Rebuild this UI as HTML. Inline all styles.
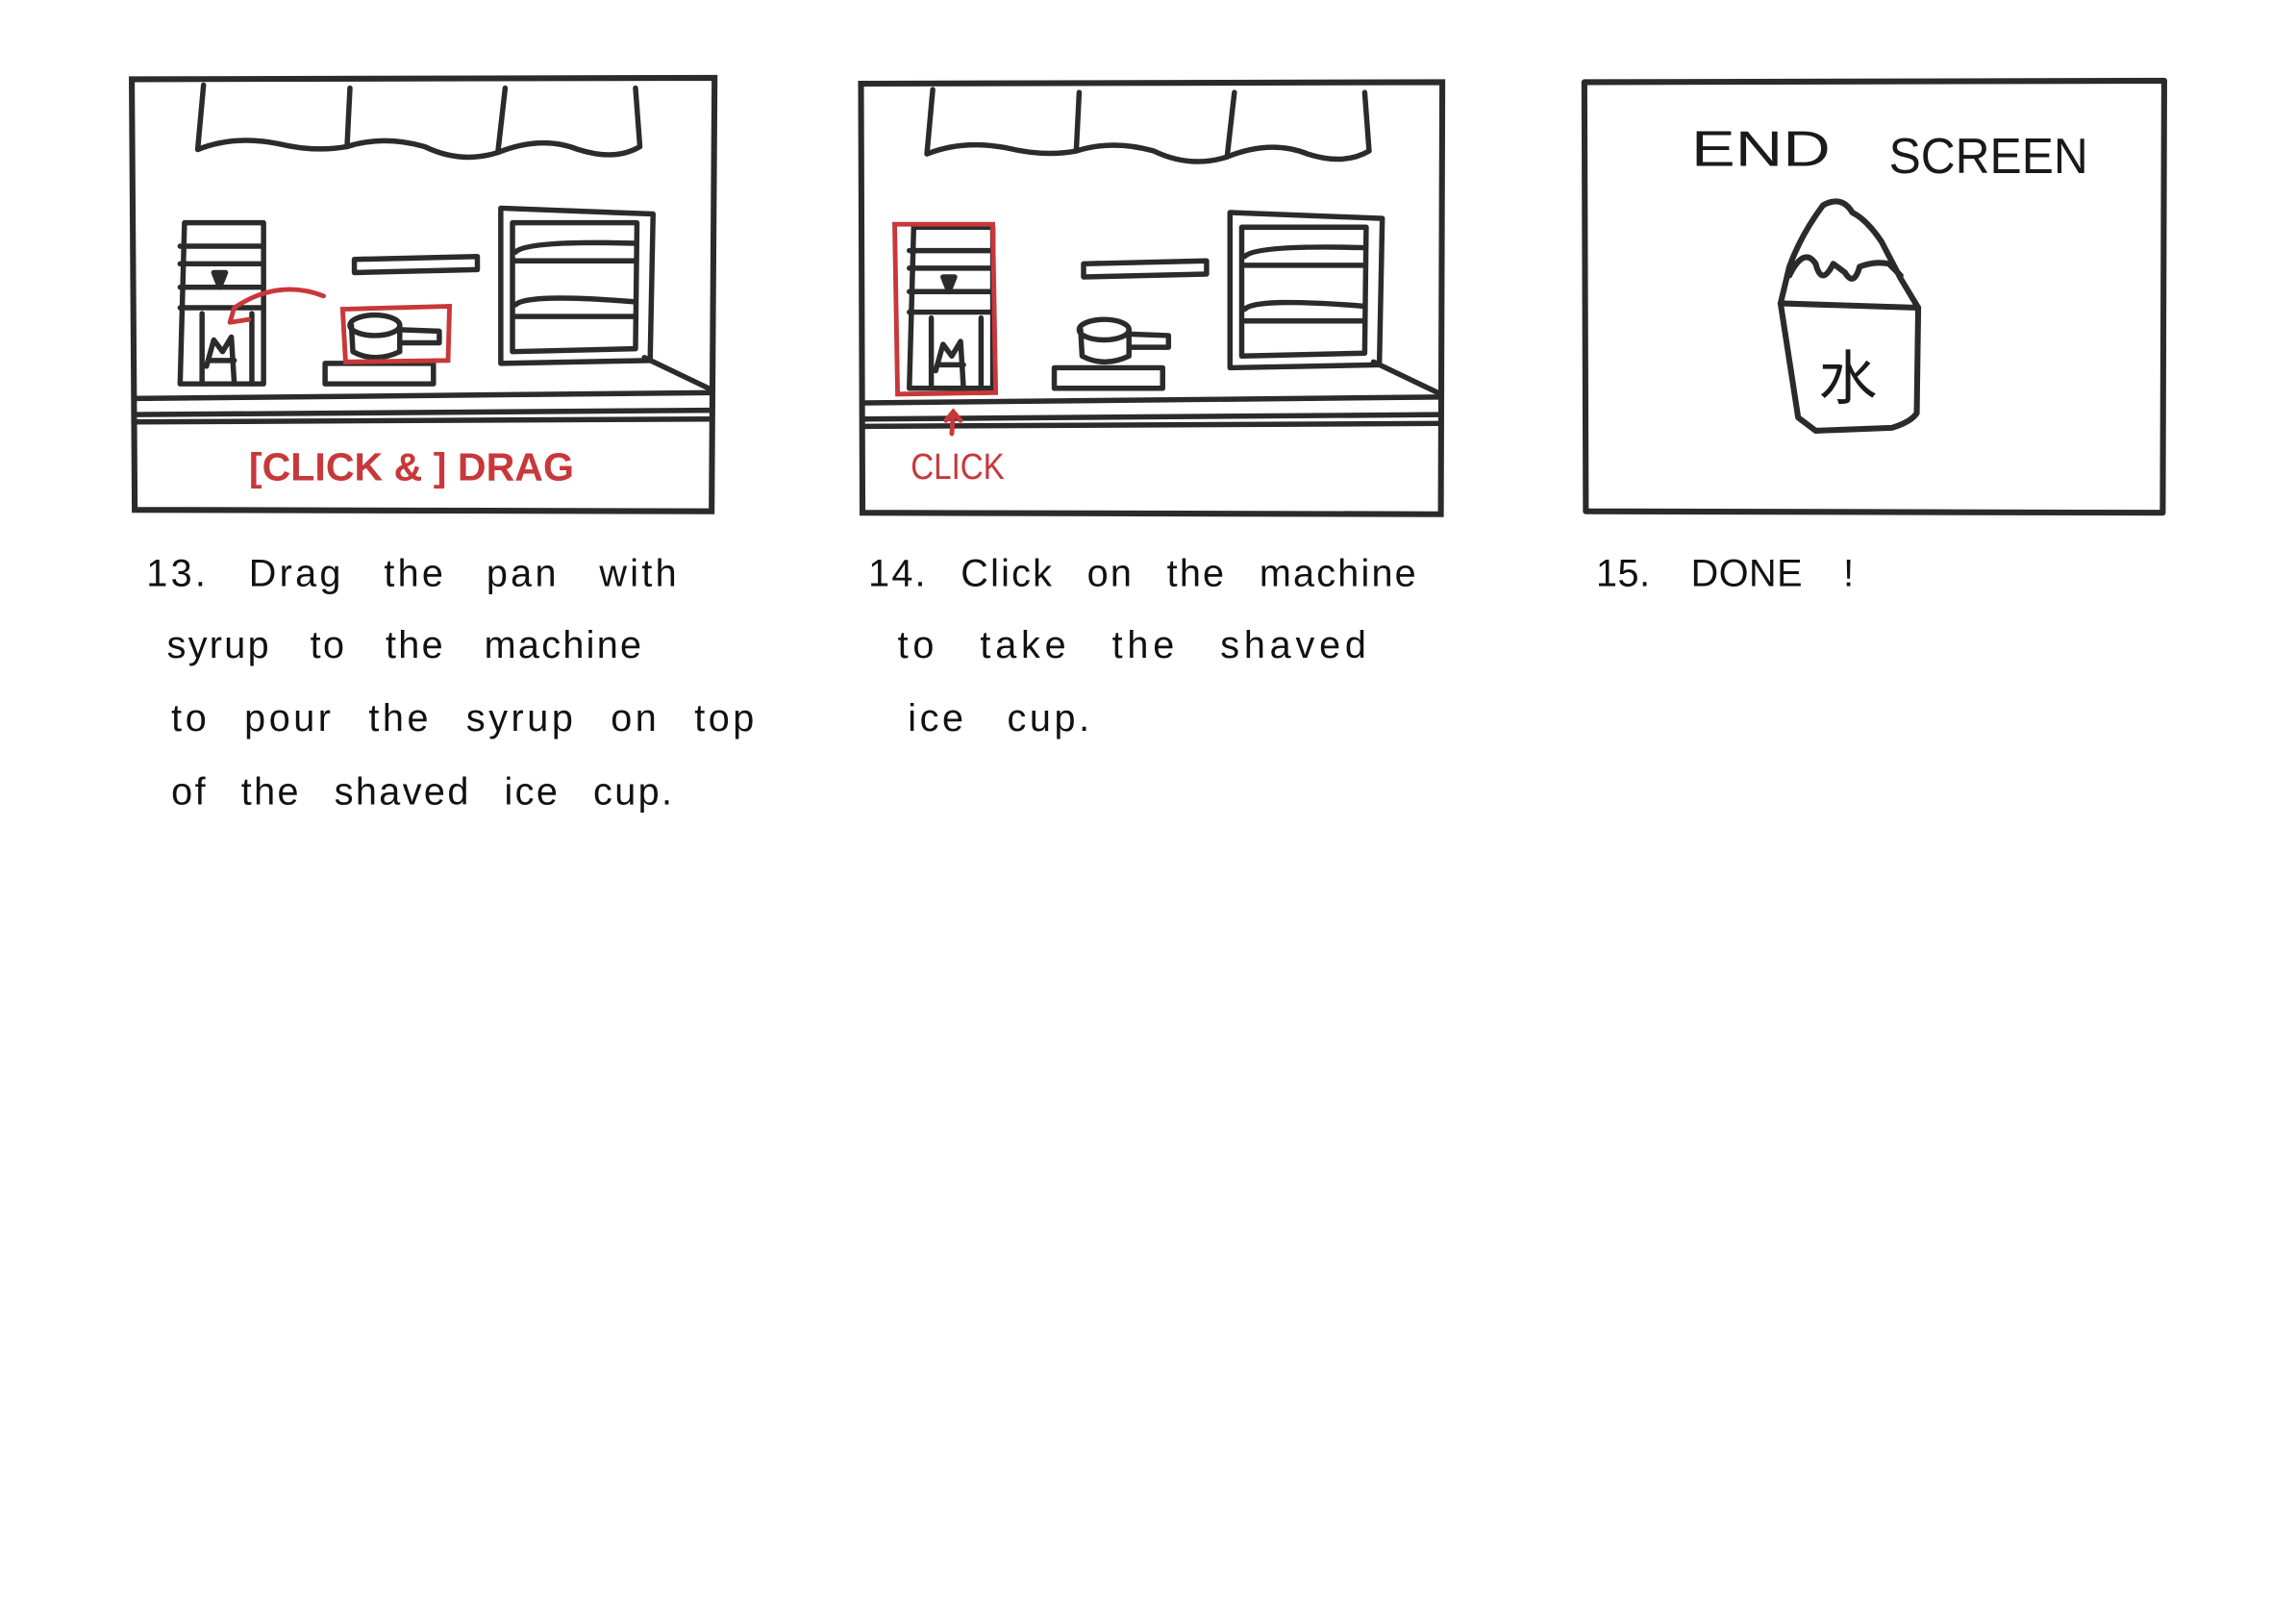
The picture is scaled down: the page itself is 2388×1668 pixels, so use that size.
<!DOCTYPE html>
<html><head><meta charset="utf-8"><style>
html,body{margin:0;padding:0;background:#fff;}
svg{display:block;}
text{font-family:"Liberation Sans",sans-serif;}
</style></head><body>
<svg width="2388" height="1668" viewBox="0 0 1568 1095" xmlns="http://www.w3.org/2000/svg">
<rect width="1568" height="1095" fill="#fff"/>
<defs>
<g id="scene" fill="none" stroke="#2b2b2b" stroke-width="3.6" stroke-linecap="round" stroke-linejoin="round">
  <path d="M139 58 L135 102 Q160 92 190 98 Q215 104 237 100 L239 60"/>
  <path d="M237 100 Q262 92 290 100 Q315 112 340 104 L345 60"/>
  <path d="M340 104 Q370 92 395 102 Q420 110 437 100 L434 60"/>
  <path d="M126 152 L180 152 L180 262 L123 262 Z"/>
  <path d="M123 168 L180 168 M123 180 L180 180 M123 196 L180 196 M123 210 L180 210"/>
  <path d="M138 214 L138 262 M172 214 L172 262"/>
  <path d="M141 250 L146 232 L152 240 L158 230 L160 262 M144 246 L160 246"/>
  <path d="M146 186 L154 186 L150 196 Z" fill="#2b2b2b"/>
  <path d="M242 177 L326 175 L326 184 L242 186 Z"/>
  <path d="M342 142 L446 146 L444 246 L342 248 Z"/>
  <path d="M350 152 L435 152 L434 238 L350 240 Z"/>
  <path d="M352 172 Q360 164 434 166 M352 178 L434 178 M352 208 Q360 200 434 206 M352 216 L434 216"/>
  <ellipse cx="256" cy="222" rx="17" ry="7"/>
  <path d="M240 222 L241 240 Q256 248 273 240 L273 222 M273 225 L300 226 L300 234 L273 234"/>
  <path d="M222 248 L296 248 L296 262 L222 262 Z"/>
  <path d="M92 272 L484 268 M92 283 L486 280 M92 288 L486 286"/>
  <path d="M440 244 L486 266"/>
</g>
</defs>

<g fill="none" stroke="#2b2b2b" stroke-width="4" stroke-linecap="round">
<path d="M90 54 L488 53 L486 349 L92 348 Z"/>
</g>
<use href="#scene"/>
<g fill="none" stroke="#c8383a" stroke-width="3.2" stroke-linecap="round">
<path d="M234 211 L307 209 L306 246 L236 247 Z"/>
<path d="M221 202 Q190 190 160 210 L157 220 M157 220 L170 218"/>
</g>
<text x="170" y="328" font-size="27" font-weight="bold" fill="#c8383a" textLength="222" lengthAdjust="spacingAndGlyphs">[CLICK &amp; ] DRAG</text>

<g fill="none" stroke="#2b2b2b" stroke-width="4" stroke-linecap="round">
<path d="M588 57 L985 56 L984 351 L589 350 Z"/>
</g>
<use href="#scene" transform="translate(498 3)"/>
<g fill="none" stroke="#c8383a" stroke-width="3.2" stroke-linecap="round">
<path d="M611 153 L678 153 L680 268 L613 269 Z"/>
<path d="M650 296 L651 282 M646 287 L651 281 L656 287"/>
</g>
<text x="622" y="327" font-size="25" fill="#c8383a" textLength="64" lengthAdjust="spacingAndGlyphs">CLICK</text>

<g fill="none" stroke="#2b2b2b" stroke-width="4" stroke-linecap="round" stroke-linejoin="round">
<path d="M1082 56 L1478 55 L1477 350 L1083 349 Z"/>
<path d="M1222 182 Q1230 160 1245 140 Q1258 133 1265 145 Q1275 150 1285 165 L1298 190 L1310 210 L1216 207 Z"/>
<path d="M1222 188 Q1232 168 1240 180 Q1244 196 1252 180 L1260 186 Q1266 196 1270 182 Q1280 178 1290 180 L1298 188"/>
<path d="M1216 207 L1228 285 L1240 294 L1292 292 Q1305 288 1309 282 L1310 210"/>
</g>
<text x="1262" y="272" font-size="40" text-anchor="middle" fill="#1a1a1a" style="font-family:'Noto Sans CJK SC',sans-serif">水</text>
<text x="1155" y="113" font-size="34" fill="#1a1a1a" textLength="95" lengthAdjust="spacingAndGlyphs">END</text>
<text x="1290" y="118" font-size="34" fill="#1a1a1a" textLength="136" lengthAdjust="spacingAndGlyphs">SCREEN</text>

<g fill="#111" font-size="26">
<text x="100" y="400" textLength="362" lengthAdjust="spacing" word-spacing="18">13.  Drag  the  pan  with</text>
<text x="114" y="449" textLength="324" lengthAdjust="spacing" word-spacing="18">syrup  to  the  machine</text>
<text x="117" y="499" textLength="398" lengthAdjust="spacing" word-spacing="14">to  pour  the  syrup  on  top</text>
<text x="117" y="549" textLength="342" lengthAdjust="spacing" word-spacing="14">of the  shaved  ice  cup.</text>
<text x="593" y="400" textLength="374" lengthAdjust="spacing" word-spacing="14">14.  Click  on  the  machine</text>
<text x="613" y="449" textLength="320" lengthAdjust="spacing" word-spacing="18">to  take  the  shaved</text>
<text x="620" y="499" textLength="124" lengthAdjust="spacing" word-spacing="18">ice  cup.</text>
<text x="1090" y="400" textLength="176" lengthAdjust="spacing" word-spacing="20">15.  DONE !</text>
</g>
</svg>
</body></html>
